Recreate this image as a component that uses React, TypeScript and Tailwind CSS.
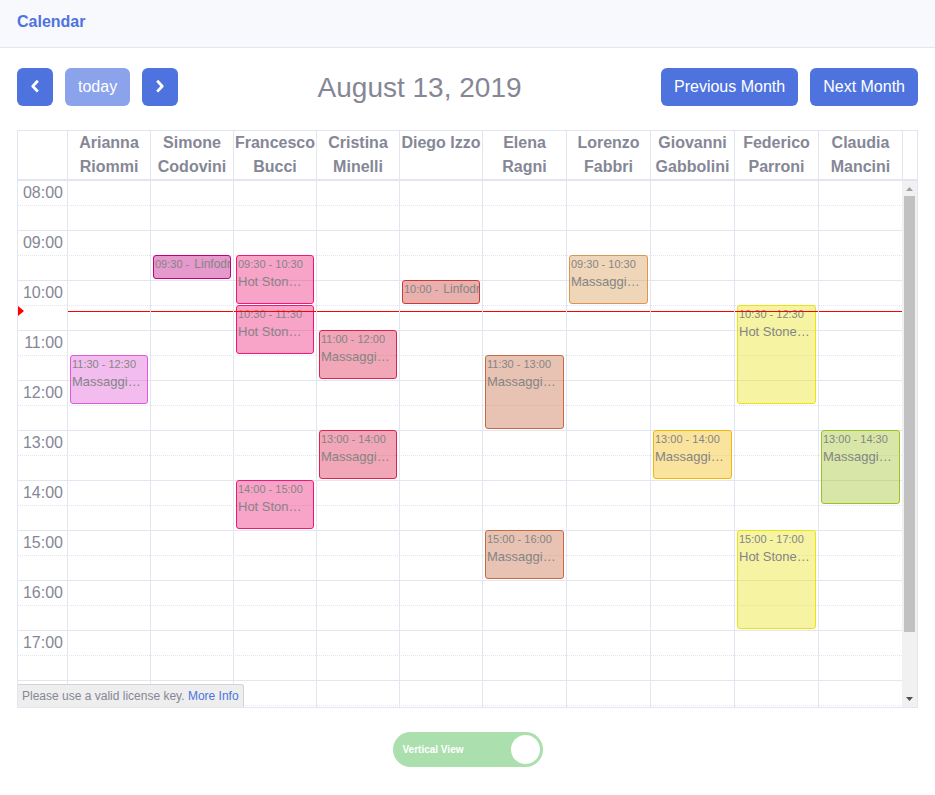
import { useState } from "react";

type CalendarEvent = {
  start: string;
  end: string;
  title: string;
};

type Resource = {
  name: string;
  tone: string;
  events: CalendarEvent[];
};

const FIRST_HOUR = 8;
const LAST_LABELLED_HOUR = 17;
const SLOT_COUNT = 22;
const SLOT_HEIGHT = 25;

const resources: Resource[] = [
  {
    name: "Arianna Riommi",
    tone: "border-[#df5ad5] bg-[#df5ad5]/40",
    events: [{ start: "11:30", end: "12:30", title: "Massaggio Rilassante" }],
  },
  {
    name: "Simone Codovini",
    tone: "border-[#bf0080] bg-[#bf0080]/40",
    events: [{ start: "09:30", end: "10:00", title: "Linfodrenaggio" }],
  },
  {
    name: "Francesco Bucci",
    tone: "border-[#ee1976] bg-[#ee1976]/40",
    events: [
      { start: "09:30", end: "10:30", title: "Hot Stone Massage" },
      { start: "10:30", end: "11:30", title: "Hot Stone Massage" },
      { start: "14:00", end: "15:00", title: "Hot Stone Massage" },
    ],
  },
  {
    name: "Cristina Minelli",
    tone: "border-[#dc244b] bg-[#dc244b]/40",
    events: [
      { start: "11:00", end: "12:00", title: "Massaggio Rilassante" },
      { start: "13:00", end: "14:00", title: "Massaggio Rilassante" },
    ],
  },
  {
    name: "Diego Izzo",
    tone: "border-[#cb3935] bg-[#cb3935]/40",
    events: [{ start: "10:00", end: "10:30", title: "Linfodrenaggio" }],
  },
  {
    name: "Elena Ragni",
    tone: "border-[#c66a44] bg-[#c66a44]/40",
    events: [
      { start: "11:30", end: "13:00", title: "Massaggio Rilassante" },
      { start: "15:00", end: "16:00", title: "Massaggio Rilassante" },
    ],
  },
  {
    name: "Lorenzo Fabbri",
    tone: "border-[#d99850] bg-[#d99850]/40",
    events: [{ start: "09:30", end: "10:30", title: "Massaggio Rilassante" }],
  },
  {
    name: "Giovanni Gabbolini",
    tone: "border-[#f2b807] bg-[#f2b807]/40",
    events: [{ start: "13:00", end: "14:00", title: "Massaggio Rilassante" }],
  },
  {
    name: "Federico Parroni",
    tone: "border-[#e8e410] bg-[#e8e41a]/40",
    events: [
      { start: "10:30", end: "12:30", title: "Hot Stone Massage" },
      { start: "15:00", end: "17:00", title: "Hot Stone Massage" },
    ],
  },
  {
    name: "Claudia Mancini",
    tone: "border-[#9dc322] bg-[#9dc322]/40",
    events: [{ start: "13:00", end: "14:30", title: "Massaggio Rilassante" }],
  },
];

const slots = Array.from({ length: SLOT_COUNT }, (_, i) => i);

function slotOf(time: string) {
  const [h, m] = time.split(":").map(Number);
  return (h - FIRST_HOUR) * 2 + m / 30;
}

function slotLabel(slot: number) {
  const hour = FIRST_HOUR + slot / 2;
  if (slot % 2 === 1 || hour > LAST_LABELLED_HOUR) return null;
  return `${String(hour).padStart(2, "0")}:00`;
}

function Chevron({ direction }: { direction: "left" | "right" }) {
  return (
    <svg viewBox="0 0 16 16" className="size-4" fill="none" stroke="currentColor" strokeWidth="2.8" aria-hidden="true">
      <path d={direction === "left" ? "M10.800 1.800 5.800 7.200l5 5.400" : "M5.200 1.800l5 5.400-5 5.400"} strokeLinejoin="round" />
    </svg>
  );
}

const button = "h-[38px] rounded-md bg-[#4e73df] text-white";

function Toolbar() {
  return (
    <div className="mb-6 flex items-center justify-between">
      <div className="flex gap-3">
        <button type="button" aria-label="prev" className={`${button} flex w-9 items-center justify-center`}>
          <Chevron direction="left" />
        </button>
        <button type="button" disabled className={`${button} px-[13px] opacity-65`}>
          today
        </button>
        <button type="button" aria-label="next" className={`${button} flex w-9 items-center justify-center`}>
          <Chevron direction="right" />
        </button>
      </div>
      <h2 className="text-[28px] leading-[33px]">August 13, 2019</h2>
      <div className="flex gap-3">
        <button type="button" className={`${button} px-[13px]`}>
          Previous Month
        </button>
        <button type="button" className={`${button} px-[13px]`}>
          Next Month
        </button>
      </div>
    </div>
  );
}

function EventBlock({ event, tone }: { event: CalendarEvent; tone: string }) {
  const from = slotOf(event.start);
  const length = slotOf(event.end) - from;
  const style = { top: from * SLOT_HEIGHT - 1, height: length * SLOT_HEIGHT - 1 };
  return (
    <a
      href="#"
      style={style}
      className={`absolute inset-x-[2px] block overflow-hidden rounded-[3px] border px-px text-[#858585] ${tone}`}
    >
      {length === 1 ? (
        <div className="whitespace-nowrap text-xs leading-4">
          <span className="mr-0.5 text-[11px]">{event.start} - </span>
          {event.title}
        </div>
      ) : (
        <>
          <div className="whitespace-nowrap text-[11px] leading-4">
            {event.start} - {event.end}
          </div>
          <div className="truncate pr-1 text-[13px] leading-5">{event.title}</div>
        </>
      )}
    </a>
  );
}

function Scrollbar() {
  return (
    <div className="flex w-[15px] shrink-0 flex-col items-center bg-[#f1f1f1]" aria-hidden="true">
      <svg viewBox="0 0 15 15" className="size-[15px]" fill="#a3a3a3">
        <path d="M4 10h7L7.500 6z" />
      </svg>
      <div className="flex w-[11px] flex-1 flex-col">
        <div className="h-[88%] bg-[#c1c1c1]" />
      </div>
      <svg viewBox="0 0 15 15" className="size-[15px]" fill="#505050">
        <path d="M4 5h7l-3.500 4z" />
      </svg>
    </div>
  );
}

function Schedule() {
  return (
    <div className="border border-[#e3e6f0]">
      <table className="block">
        <thead className="block">
          <tr className="grid grid-cols-[49px_repeat(5,minmax(0,83fr))_repeat(5,minmax(0,84fr))_15px] border-b-2 border-[#e3e6f0]">
            <td />
            {resources.map((r) => (
              <th key={r.name} scope="col" className="border-l border-[#e3e6f0] font-bold leading-6">
                {r.name}
              </th>
            ))}
            <td className="border-l border-[#e3e6f0]" />
          </tr>
        </thead>
      </table>
      <div className="relative flex h-[526px] overflow-hidden">
        <div className="relative flex-1">
          <table className="w-full table-fixed border-separate border-spacing-0">
            <tbody>
              {slots.map((i) => {
                const line =
                  i === 0
                    ? "h-6 p-0"
                    : i % 2 === 0
                      ? "h-[25px] border-t border-[#e3e6f0] p-0"
                      : "h-[25px] border-t border-dotted border-[#e3e6f0] p-0";
                return (
                  <tr key={i}>
                    <th scope="row" className={`${line} w-[49px] pr-1 text-right font-normal leading-6`}>
                      {slotLabel(i)}
                    </th>
                    <td className={line} />
                  </tr>
                );
              })}
            </tbody>
          </table>
          <div className="absolute inset-0 grid grid-cols-[49px_repeat(5,minmax(0,83fr))_repeat(5,minmax(0,84fr))]">
            <div className="relative">
              <div className="absolute left-0 top-[125px] border-y-[5px] border-l-[6px] border-y-transparent border-l-[#ff0000]" />
            </div>
            {resources.map((r) => (
              <div key={r.name} className="relative border-l border-[#e3e6f0]">
                {r.events.map((e) => (
                  <EventBlock key={e.start} event={e} tone={r.tone} />
                ))}
                <div className="absolute inset-x-0 top-[130px] h-px bg-[#ff0000]" />
              </div>
            ))}
          </div>
        </div>
        <Scrollbar />
        <div className="absolute bottom-0 left-0 rounded-tr-[3px] border-r border-t border-[#d3d3d3] bg-[#eeeeee] px-1 py-[3px] text-xs">
          Please use a valid license key.{" "}
          <a href="#" className="text-[#4e73df]">
            More Info
          </a>
        </div>
      </div>
    </div>
  );
}

export default function App() {
  const [vertical, setVertical] = useState(true);
  return (
    <div className="bg-white font-['Liberation_Sans',Arial,sans-serif] text-base text-[#858796]">
      <header className="h-12 border-b border-[#e3e6f0] bg-[#f8f9fc] px-[17px] pt-3">
        <h1 className="font-bold leading-5 text-[#4e73df]">Calendar</h1>
      </header>
      <main className="px-[17px] py-5">
        <Toolbar />
        <Schedule />
        <div className="mt-6 flex justify-center">
          <label
            className={`flex h-[35px] w-[150px] cursor-pointer items-center justify-between rounded-full bg-[#abdfae] pl-[10px] pr-[3px] text-[10px] font-bold text-white ${
              vertical ? "flex-row" : "flex-row-reverse"
            }`}
          >
            Vertical View
            <input
              type="checkbox"
              checked={vertical}
              onChange={(e) => setVertical(e.target.checked)}
              className="size-[29px] cursor-pointer appearance-none rounded-full bg-white"
            />
          </label>
        </div>
      </main>
    </div>
  );
}
